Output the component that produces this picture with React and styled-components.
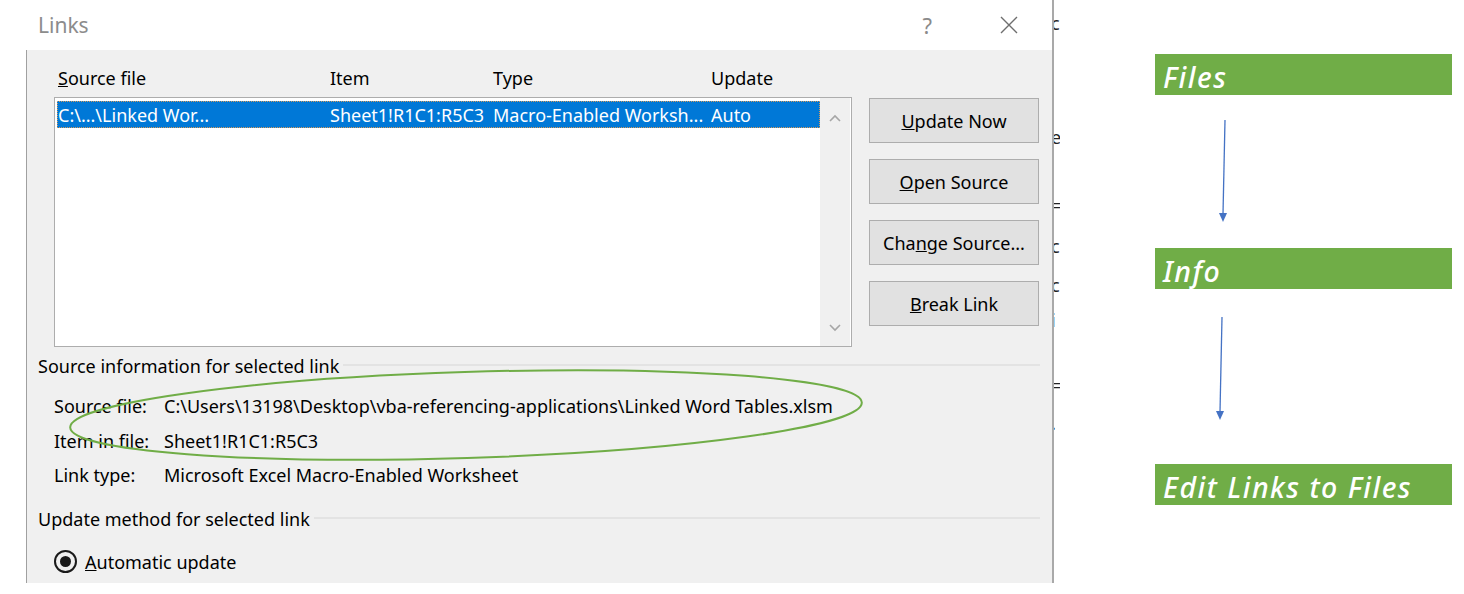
import React from "react";
import styled, { createGlobalStyle } from "styled-components";

const GlobalStyle = createGlobalStyle`
  html, body {
    margin: 0;
    padding: 0;
    background: #fff;
  }
  body {
    font-family: "Noto Sans", "Open Sans", sans-serif;
  }
`;

const COLS = "272px 163px 218px 1fr";

const Page = styled.div`
  position: relative;
  display: flex;
  width: 1464px;
  height: 594px;
  overflow: hidden;
  background: #fff;
`;

const Dialog = styled.div`
  margin-left: 26px;
  width: 1026px;
  height: 583px;
  display: flex;
  flex-direction: column;
  border-right: 2px solid #a9a9a9;
  font-size: 18px;
  color: #000;
`;

const TitleBar = styled.div`
  flex-shrink: 0;
  height: 50px;
  display: flex;
  align-items: center;
  padding: 0 34px 0 12px;
  background: #fff;
`;

const Title = styled.div`
  flex: 1;
  font-size: 21px;
  color: #8c8c8c;
`;

const Help = styled.div`
  font-size: 22px;
  color: #8a8a8a;
  margin-right: 68px;
`;

const Body = styled.div`
  flex: 1;
  min-height: 0;
  overflow: hidden;
  background: #f0f0f0;
  border-left: 1px solid #a0a0a0;
  padding: 16px 12px 0 11px;
  display: flex;
  flex-direction: column;
`;

const TopSection = styled.div`
  display: flex;
  gap: 17px;
  margin-left: 16px;
`;

const ListColumn = styled.div`
  width: 798px;
  display: flex;
  flex-direction: column;
  gap: 7px;
`;

const HeaderRow = styled.div`
  display: grid;
  grid-template-columns: ${COLS};
  padding-left: 4px;
  height: 24px;
  line-height: 24px;
`;

const ListBox = styled.div`
  height: 244px;
  border: 1px solid #adadad;
  background: #fff;
  display: flex;
  padding: 3px 1px 1px 2px;
`;

const Rows = styled.div`
  flex: 1;
`;

const Row = styled.div`
  display: grid;
  grid-template-columns: ${COLS};
  height: 27px;
  line-height: 29px;
  padding-left: 1px;
  background: ${(p) => (p.$selected ? "#0078d7" : "transparent")};
  color: ${(p) => (p.$selected ? "#fff" : "#000")};
  outline: ${(p) => (p.$selected ? "1px dotted #d49a5c" : "none")};
  outline-offset: -1px;
  white-space: nowrap;
`;

const ScrollBar = styled.div`
  width: 30px;
  margin-top: -3px;
  margin-bottom: -1px;
  background: #f0f0f0;
  display: flex;
  flex-direction: column;
  justify-content: space-between;
  align-items: center;
  padding: 16px 0 14px;
`;

const ButtonColumn = styled.div`
  margin-top: 32px;
  display: flex;
  flex-direction: column;
  gap: 16px;
`;

const Button = styled.div`
  width: 168px;
  height: 43px;
  border: 1px solid #adadad;
  background: #e1e1e1;
  display: flex;
  align-items: center;
  justify-content: center;
`;

const SectionHeader = styled.div`
  display: flex;
  align-items: center;
  height: 24px;
  flex-shrink: 0;
  margin-top: ${(p) => p.$top}px;
  &::after {
    content: "";
    flex: 1;
    height: 2px;
    margin-left: 4px;
    margin-top: -2px;
    background: #e3e3e3;
  }
`;

const InfoGrid = styled.div`
  margin: 16px 0 0 16px;
  display: grid;
  grid-template-columns: 110px 1fr;
  grid-auto-rows: 34.5px;
  line-height: 24px;
  white-space: nowrap;
`;

const RadioRow = styled.div`
  margin: 19px 0 0 16px;
  display: flex;
  align-items: center;
  gap: 8px;
  height: 24px;
  flex-shrink: 0;
`;

const Radio = styled.div`
  width: 19px;
  height: 19px;
  border: 2px solid #1a1a1a;
  border-radius: 50%;
  display: flex;
  align-items: center;
  justify-content: center;
  &::after {
    content: "";
    width: 11px;
    height: 11px;
    border-radius: 50%;
    background: #1a1a1a;
  }
`;

const Strip = styled.div`
  position: relative;
  width: 6px;
  height: 583px;
  overflow: hidden;
  font-family: "Noto Sans", sans-serif;
  font-size: 18px;
  color: #222;
`;

const Peek = styled.span`
  position: absolute;
  left: -3px;
  top: ${(p) => p.$top}px;
  line-height: 1;
`;

const Flow = styled.div`
  margin-left: 95px;
  padding-top: 54px;
  width: 297px;
  display: flex;
  flex-direction: column;
`;

const Step = styled.div`
  height: 41px;
  background: #70ad47;
  color: #fff;
  font-family: "Noto Sans", sans-serif;
  font-style: italic;
  font-weight: 500;
  font-size: 28.5px;
  letter-spacing: 1.5px;
  line-height: 46px;
  padding-left: 8px;
  white-space: nowrap;
  overflow: hidden;
`;

const ArrowBox = styled.svg`
  display: block;
  width: 297px;
  height: ${(p) => p.$h}px;
`;

const Ellipse = styled.svg`
  position: absolute;
  left: 0;
  top: 0;
  pointer-events: none;
`;

const Chevron = ({ up }) => (
  <svg width="12" height="8" viewBox="0 0 12 8">
    <polyline
      points={up ? "1,7 6,2 11,7" : "1,1 6,6 11,1"}
      fill="none"
      stroke="#a6a6a6"
      strokeWidth="1.6"
    />
  </svg>
);

const Arrow = ({ h, x1, y1, x2, y2 }) => (
  <ArrowBox $h={h} viewBox={`0 0 297 ${h}`}>
    <line x1={x1} y1={y1} x2={x2} y2={y2 - 8} stroke="#4472c4" strokeWidth="1.3" />
    <polygon points={`${x2 - 4},${y2 - 9} ${x2 + 4},${y2 - 9} ${x2},${y2}`} fill="#4472c4" />
  </ArrowBox>
);

const peeks = [
  ["c", 14],
  ["e", 128],
  ["=", 196],
  ["c", 237],
  ["c", 276],
  ["i", 311],
  ["=", 376],
  [".", 414],
];

export default function App() {
  return (
    <Page>
      <GlobalStyle />
      <Dialog>
        <TitleBar>
          <Title>Links</Title>
          <Help>?</Help>
          <svg width="18" height="18" viewBox="0 0 18 18">
            <path d="M1 1 L17 17 M17 1 L1 17" stroke="#6e6e6e" strokeWidth="1.4" />
          </svg>
        </TitleBar>
        <Body>
          <TopSection>
            <ListColumn>
              <HeaderRow>
                <span>
                  <u>S</u>ource file
                </span>
                <span>Item</span>
                <span>Type</span>
                <span>Update</span>
              </HeaderRow>
              <ListBox>
                <Rows>
                  <Row $selected>
                    <span>C:\...\Linked Wor...</span>
                    <span>Sheet1!R1C1:R5C3</span>
                    <span>Macro-Enabled Worksh...</span>
                    <span>Auto</span>
                  </Row>
                </Rows>
                <ScrollBar>
                  <Chevron up />
                  <Chevron />
                </ScrollBar>
              </ListBox>
            </ListColumn>
            <ButtonColumn>
              <Button>
                <span>
                  <u>U</u>pdate Now
                </span>
              </Button>
              <Button>
                <span>
                  <u>O</u>pen Source
                </span>
              </Button>
              <Button>
                <span>
                  Cha<u>n</u>ge Source...
                </span>
              </Button>
              <Button>
                <span>
                  <u>B</u>reak Link
                </span>
              </Button>
            </ButtonColumn>
          </TopSection>

          <SectionHeader $top={7}>Source information for selected link</SectionHeader>
          <InfoGrid>
            <span>Source file:</span>
            <span>C:\Users\13198\Desktop\vba-referencing-applications\Linked Word Tables.xlsm</span>
            <span>Item in file:</span>
            <span>Sheet1!R1C1:R5C3</span>
            <span>Link type:</span>
            <span>Microsoft Excel Macro-Enabled Worksheet</span>
          </InfoGrid>

          <SectionHeader $top={9}>Update method for selected link</SectionHeader>
          <RadioRow>
            <Radio />
            <span>
              <u>A</u>utomatic update
            </span>
          </RadioRow>
        </Body>
      </Dialog>

      <Strip>
        {peeks.map(([c, t], i) => (
          <Peek key={i} $top={t}>
            {c}
          </Peek>
        ))}
      </Strip>

      <Flow>
        <Step>Files</Step>
        <Arrow h={153} x1={70} y1={25} x2={68} y2={127} />
        <Step>Info</Step>
        <Arrow h={175} x1={67} y1={28} x2={65} y2={131} />
        <Step>Edit Links to Files</Step>
      </Flow>

      <Ellipse width="1464" height="594" viewBox="0 0 1464 594">
        <ellipse
          cx="466"
          cy="415"
          rx="396"
          ry="43"
          transform="rotate(-1.8 466 415)"
          fill="none"
          stroke="#70ad47"
          strokeWidth="2"
        />
      </Ellipse>
    </Page>
  );
}
